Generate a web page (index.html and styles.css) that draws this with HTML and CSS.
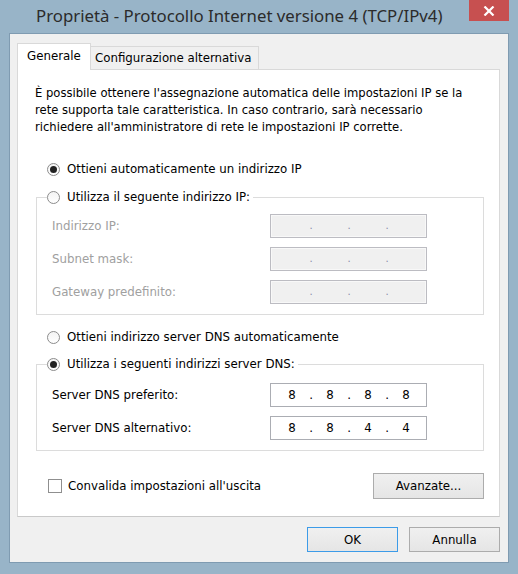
FILE: index.html
```html
<!DOCTYPE html>
<html>
<head>
  <title>Proprietà - Protocollo Internet versione 4 (TCP/IPv4)</title>
  <link rel="stylesheet" href="styles.css">
</head>
<body>

  <div class="window">
    <div class="titlebar">
      <div class="title">Proprietà - Protocollo Internet versione 4 (TCP/IPv4)</div>
      <div class="close">
        <svg width="12" height="10" viewBox="0 0 12 10">
          <path d="M1.5 0.5 L10.5 9.5 M10.5 0.5 L1.5 9.5" stroke="#fff" stroke-width="2.2" fill="none"/>
        </svg>
      </div>
    </div>

    <div class="client">
      <div class="tabs">
        <div class="tab active">Generale</div>
        <div class="tab">Configurazione alternativa</div>
      </div>

      <div class="panel">
        <p class="intro">
          È possibile ottenere l'assegnazione automatica delle impostazioni IP se la<br>
          rete supporta tale caratteristica. In caso contrario, sarà necessario<br>
          richiedere all'amministratore di rete le impostazioni IP corrette.
        </p>

        <div class="option first"><span class="radio checked"></span>Ottieni automaticamente un indirizzo IP</div>

        <fieldset class="group ip-group">
          <legend class="option"><span class="radio"></span>Utilizza il seguente indirizzo IP:</legend>
          <div class="field disabled">
            <span class="label">Indirizzo IP:</span>
            <div class="ip"><span></span><i>.</i><span></span><i>.</i><span></span><i>.</i><span></span></div>
          </div>
          <div class="field disabled">
            <span class="label">Subnet mask:</span>
            <div class="ip"><span></span><i>.</i><span></span><i>.</i><span></span><i>.</i><span></span></div>
          </div>
          <div class="field disabled">
            <span class="label">Gateway predefinito:</span>
            <div class="ip"><span></span><i>.</i><span></span><i>.</i><span></span><i>.</i><span></span></div>
          </div>
        </fieldset>

        <div class="option dns-auto"><span class="radio"></span>Ottieni indirizzo server DNS automaticamente</div>

        <fieldset class="group dns-group">
          <legend class="option"><span class="radio checked"></span>Utilizza i seguenti indirizzi server DNS:</legend>
          <div class="field">
            <span class="label">Server DNS preferito:</span>
            <div class="ip"><span>8</span><i>.</i><span>8</span><i>.</i><span>8</span><i>.</i><span>8</span></div>
          </div>
          <div class="field">
            <span class="label">Server DNS alternativo:</span>
            <div class="ip"><span>8</span><i>.</i><span>8</span><i>.</i><span>4</span><i>.</i><span>4</span></div>
          </div>
        </fieldset>

        <div class="footer-row">
          <div class="check-row"><span class="checkbox"></span>Convalida impostazioni all'uscita</div>
          <button class="btn advanced">Avanzate...</button>
        </div>
      </div>

      <div class="actions">
        <button class="btn default">OK</button>
        <button class="btn">Annulla</button>
      </div>
    </div>
  </div>

</body>
</html>
```

FILE: styles.css
```css
body {
  margin: 0;
  background: #98b4c8;
  font-family: "DejaVu Sans", "Liberation Sans", sans-serif;
  font-size: 11.8px;
  color: #000;
}

.window {
  width: 518px;
  height: 574px;
  background: #98b4c8;
}

/* title bar */
.titlebar {
  height: 33px;
  display: flex;
  align-items: flex-start;
}
.title {
  flex: 1;
  padding-left: 36px;
  font-family: "Noto Sans", "Open Sans", sans-serif;
  font-size: 16.8px;
  line-height: 32px;
  color: #2b2b2b;
  white-space: nowrap;
}
.close {
  width: 40px;
  height: 21px;
  margin-right: 9px;
  background: #c75050;
  display: flex;
  align-items: center;
  justify-content: center;
}

/* client area */
.client {
  margin: 0 9px;
  border: 1px solid #7f9bb1;
  background: #f0f0f0;
  padding: 9px 8px 10px 0;
}

.tabs {
  display: flex;
  align-items: flex-end;
  height: 27px;
  padding-left: 7px;
  margin-bottom: -1px;
  position: relative;
  z-index: 1;
}
.tab {
  box-sizing: border-box;
  height: 24px;
  padding: 3px 4px 0;
  line-height: 17px;
  background: #f0f0f0;
  border: 1px solid #d9d9d9;
  border-left: none;
  white-space: nowrap;
  width: 168px;
}
.tab.active {
  width: 74px;
  height: 27px;
  padding: 4px 9px 0;
  background: #fff;
  border-left: 1px solid #d9d9d9;
  border-bottom: none;
}

.panel {
  margin-left: 7px;
  margin-right: 0;
  background: #fff;
  border: 1px solid #d9d9d9;
  border-bottom-color: #c9c9c9;
  padding: 15px 15px 17px 17px;
}

.intro {
  margin: 0;
  font-size: 11.6px;
  line-height: 17px;
  white-space: nowrap;
}

/* radio and checkbox rows */
.option {
  display: flex;
  align-items: center;
  height: 20px;
  line-height: 20px;
  white-space: nowrap;
}
.option.first {
  margin-top: 23px;
  padding-left: 12px;
}
.option.dns-auto {
  margin-top: 12px;
  padding-left: 12px;
}
.radio {
  box-sizing: border-box;
  width: 13px;
  height: 13px;
  margin-right: 7px;
  border: 1px solid #8c8c8c;
  border-radius: 50%;
  background: linear-gradient(#f4f4f4, #fff);
  position: relative;
}
.radio.checked::after {
  content: "";
  position: absolute;
  left: 2px;
  top: 2px;
  width: 7px;
  height: 7px;
  border-radius: 50%;
  background: #222;
}

/* group boxes */
.group {
  margin: 8px 0 0 1px;
  border: 1px solid #dcdcdc;
  padding: 7px 0 10px 10px;
  min-width: 0;
}
.group legend {
  padding: 0 3px 0 0;
}
.dns-group {
  margin-top: 7px;
  padding-top: 9px;
}

.field {
  display: grid;
  grid-template-columns: 218px 157px;
  align-items: center;
  height: 24px;
  padding-left: 5px;
}
.field + .field {
  margin-top: 9px;
}
.field.disabled .label {
  color: #a0a0a0;
}

.ip {
  box-sizing: border-box;
  height: 24px;
  border: 1px solid #abadb3;
  background: #fff;
  display: grid;
  grid-template-columns: 28px 10px 28px 10px 28px 10px 28px;
  padding-left: 7px;
  align-items: center;
  line-height: 20px;
}
.ip span,
.ip i {
  font-style: normal;
  text-align: center;
}
.field.disabled .ip {
  background: #f0f0f0;
  border: 1px solid #bcbcc2;
  box-shadow: inset 0 0 0 1px #f8f8f8;
}
.field.disabled .ip i {
  color: #8a8aa8;
  font-size: 10px;
}

/* bottom of the panel */
.footer-row {
  display: flex;
  justify-content: space-between;
  align-items: center;
  margin-top: 22px;
}
.check-row {
  display: flex;
  align-items: center;
  padding-left: 13px;
}
.checkbox {
  box-sizing: border-box;
  width: 14px;
  height: 14px;
  margin-right: 6px;
  border: 1px solid #8f8f8f;
  background: #fff;
}

.btn {
  box-sizing: border-box;
  font-family: inherit;
  font-size: 11.8px;
  color: #000;
  height: 25px;
  width: 91px;
  border: 1px solid #acacac;
  background: linear-gradient(#f0f0f0, #e5e5e5);
  padding: 0;
}
.btn.advanced {
  width: 111px;
  height: 26px;
}
.btn.default {
  border-color: #3c9be8;
}

.actions {
  display: flex;
  justify-content: flex-end;
  gap: 11px;
  margin-top: 10px;
}
```
